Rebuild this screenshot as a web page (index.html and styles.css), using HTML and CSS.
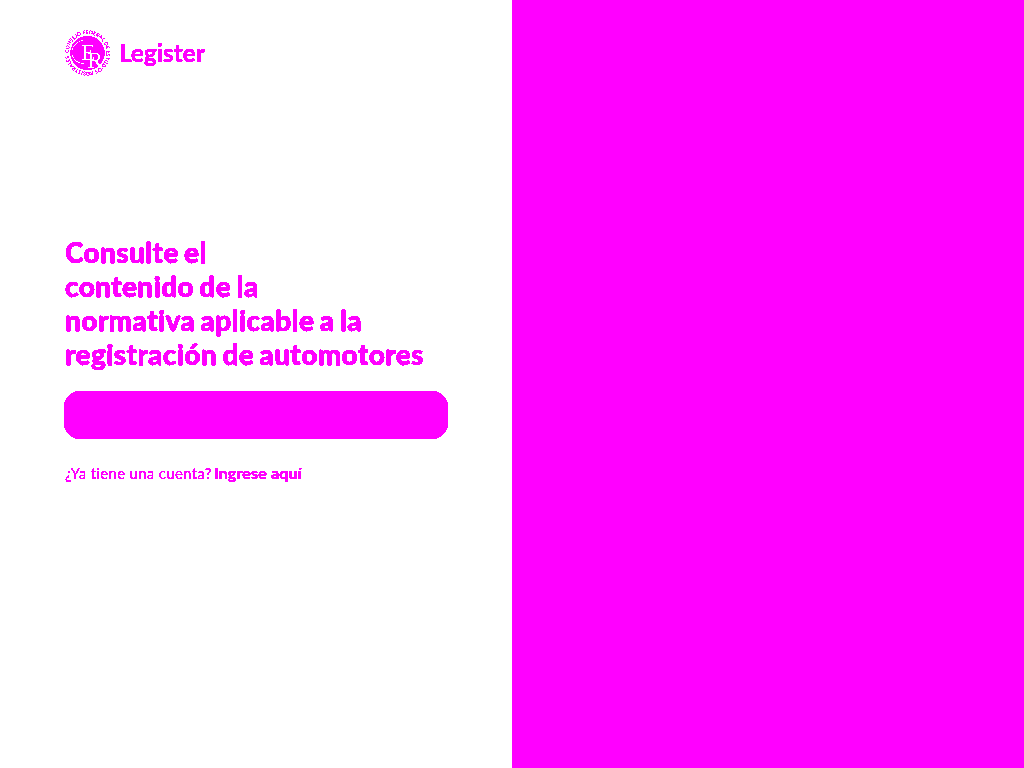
FILE: index.html
```html
<!DOCTYPE html>
<html lang="es">
<head>
  <meta charset="UTF-8" />
  <meta name="viewport" content="width=device-width, initial-scale=1.0" />
  <title>Legister</title>
  <link rel="stylesheet" href="styles.css">
</head>
<body>
  <!-- hard edges on text, no smoothing -->
  <svg class="defs" width="0" height="0" aria-hidden="true">
    <filter id="hard" color-interpolation-filters="sRGB">
      <feComponentTransfer>
        <feFuncG type="discrete" tableValues="0 0 0 1"></feFuncG>
      </feComponentTransfer>
    </filter>
  </svg>
  <main class="split">
    <section class="left">
      <header class="brand">
        <svg class="brand-logo" width="48" height="48" viewBox="0 0 48 48" aria-hidden="true">
          <defs>
            <path id="ring" d="M23.5 24 m-19 0 a19 19 0 1 1 38 0 a19 19 0 1 1 -38 0"></path>
          </defs>
          <circle class="logo-disc" cx="23.5" cy="24" r="17"></circle>
          <path class="logo-arc" d="M22 11 C13 11 7 18 8 25 C9 31 15 35 22 35"></path>
          <text class="logo-ring"><textPath href="#ring" textLength="116">CONSEJO FEDERAL DE ESTUDIOS REGISTRALES</textPath></text>
          <text class="logo-mono" x="17" y="31">E</text>
          <text class="logo-mono" x="23" y="39">R</text>
        </svg>
        <span class="brand-name">Legister</span>
      </header>
      <div class="content">
        <h1 class="title">Consulte el<br>contenido de la<br>normativa aplicable a la<br>registración de automotores</h1>
        <a class="cta" href="#"></a>
        <p class="login">¿Ya tiene una cuenta? <a href="#">Ingrese aquí</a></p>
      </div>
    </section>
    <section class="right"></section>
  </main>
</body>
</html>
```
FILE: styles.css
```css
* { box-sizing: border-box; }
html, body { margin: 0; height: 100%; }
body { font-family: "Lato", sans-serif; color: #ff00ff; background: #fff; }
.defs { display: block; height: 0; }
.split { display: flex; height: 768px; }
.left { width: 512px; padding: 29px 64px 0; background: #fff; filter: url(#hard); }
.right { width: 512px; background: #ff00ff; }
.brand { display: flex; align-items: center; gap: 7px; height: 48px; }
.brand-logo { display: block; }
.logo-disc { fill: #ff00ff; }
.logo-arc { fill: none; stroke: #fff; stroke-width: 1.2; }
.logo-ring { font-family: "Lato", sans-serif; font-size: 5px; font-weight: 400; fill: #ff00ff; }
.logo-mono { font-family: "Liberation Serif", serif; font-size: 24px; fill: #fff; stroke: #fff; stroke-width: 0.3; }
.brand-name { font-size: 24px; font-weight: 700; letter-spacing: 0.15px; padding-bottom: 2px; -webkit-text-stroke: 0.2px #ff00ff; }
.content { margin-top: 158px; }
.title { margin: 0; padding-left: 1px; font-size: 28px; line-height: 34px; font-weight: 900; letter-spacing: 0.34px; word-spacing: -1.6px; -webkit-text-stroke: 0.3px #ff00ff; }
.cta { display: block; width: 384px; height: 48px; margin-top: 20px; border-radius: 16px; background: #ff00ff; }
.login { margin: 23px 0 0; padding-left: 1px; font-size: 15px; line-height: 22px; letter-spacing: 0.3px; }
.login a { margin-left: -2px; font-size: 16px; font-weight: 700; color: #ff00ff; text-decoration: none; letter-spacing: 0.15px; -webkit-text-stroke: 0.15px #ff00ff; }
```
